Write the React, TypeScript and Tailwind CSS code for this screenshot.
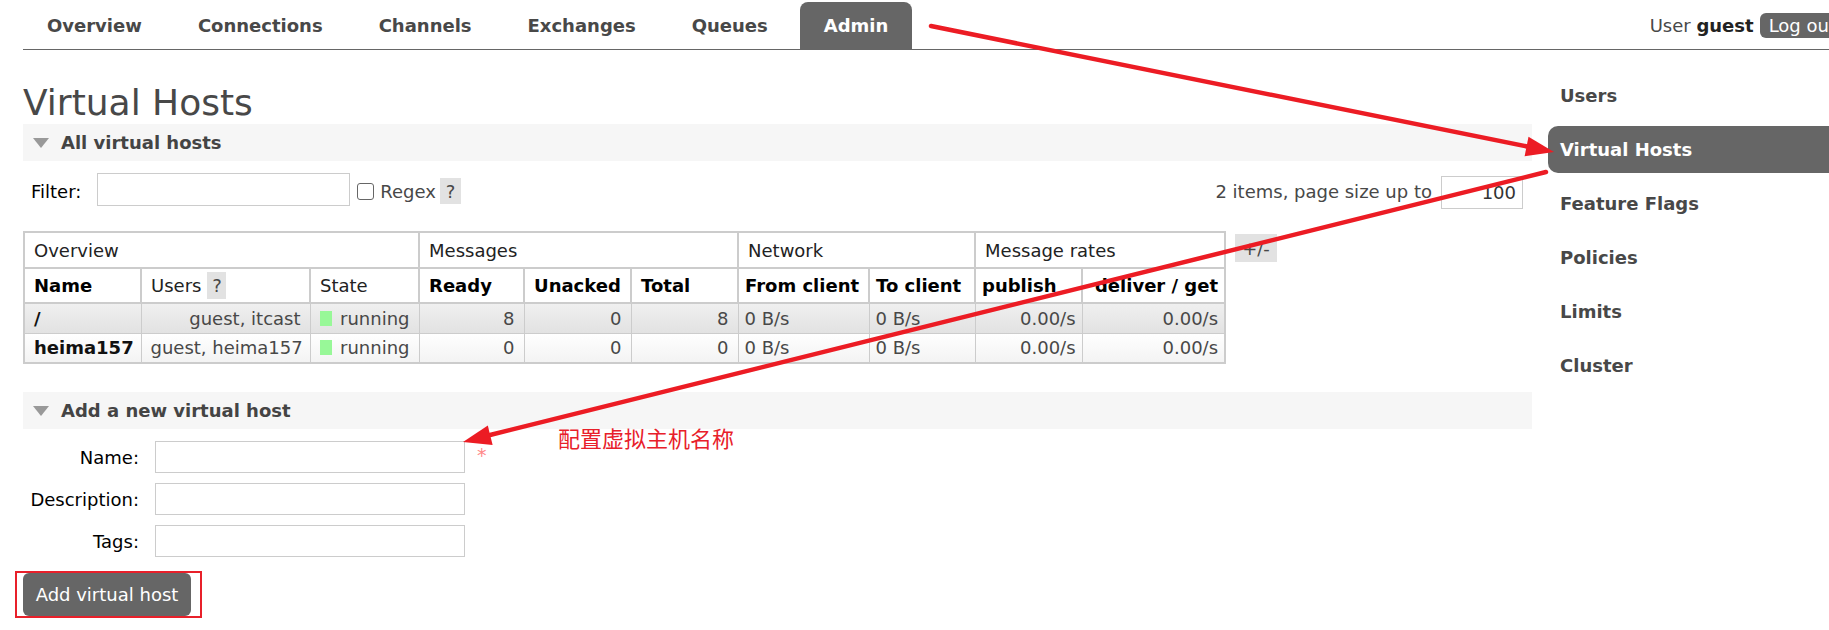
const tabs = ["Overview", "Connections", "Channels", "Exchanges", "Queues", "Admin"];
const sideItems = ["Users", "Virtual Hosts", "Feature Flags", "Policies", "Limits", "Cluster"];

const colWidths = [
  "w-[117px]",
  "w-[169px]",
  "w-[109px]",
  "w-[105px]",
  "w-[107px]",
  "w-[107px]",
  "w-[131px]",
  "w-[106px]",
  "w-[107px]",
  "w-[143px]",
];

const vhosts = [
  { name: "/", users: "guest, itcast", ready: 8, unacked: 0, total: 8, alt: true },
  { name: "heima157", users: "guest, heima157", ready: 0, unacked: 0, total: 0, alt: false },
];

export default function App() {
  return (
    <div className="relative w-full h-[630px] overflow-hidden bg-white font-['DejaVu_Sans',sans-serif] text-[18px] text-[#484848]">
      {/* Top tabs */}
      <div className="flex pl-[23px]">
        <div className="flex flex-1 items-end gap-2 border-b border-[#666] pt-[2px]">
          {tabs.map((t) => (
            <div
              key={t}
              className={
                t === "Admin"
                  ? "h-[47px] px-6 flex items-center font-bold bg-[#666] text-white rounded-t-[8px]"
                  : "h-[47px] px-6 flex items-center font-bold"
              }
            >
              {t}
            </div>
          ))}
          <div className="ml-auto self-start mt-[10px] mr-[-16px] flex items-center gap-[6px] whitespace-nowrap">
            <span>
              User <b className="text-[#222]">guest</b>
            </span>
            <span className="h-[25px] px-[9px] rounded-[6px] bg-[#666] text-white flex items-center">
              Log out
            </span>
          </div>
        </div>
      </div>

      <div className="flex">
        {/* Main column */}
        <div className="w-[1509px] ml-[23px] shrink-0">
          <h1 className="mt-[33px] h-[40px] leading-[40px] text-[36px] font-normal">Virtual Hosts</h1>

          <SectionHeader title="All virtual hosts" className="mt-[1px]" />

          {/* Filter row */}
          <div className="mt-[12px] h-[36px] flex items-center">
            <span className="ml-[8px] text-black">Filter:</span>
            <input className="self-start ml-[16px] w-[253px] h-[33px] border border-[#ccc] bg-white" />
            <span className="ml-[7px] w-[17px] h-[17px] border border-[#666] rounded-[3px] bg-white" />
            <span className="ml-[6px]">Regex</span>
            <span className="ml-[4px] w-[21px] h-[26px] bg-[#e2e2e2] flex items-center justify-center">?</span>
            <span className="ml-auto">2 items, page size up to</span>
            <div className="self-end ml-[9px] mr-[9px] w-[82px] h-[33px] border border-[#ccc] flex items-center justify-end pr-[6px] text-[#333]">
              100
            </div>
          </div>

          {/* Table */}
          <div className="mt-[22px] flex items-start gap-[9px]">
            <table className="table-fixed border-collapse w-[1201px] border-2 border-[#ccc]">
              <colgroup>
                {colWidths.map((w, i) => (
                  <col key={i} className={w} />
                ))}
              </colgroup>
              <thead>
                <tr className="h-[36px] text-[#222]">
                  <th colSpan={3} className="border-2 border-[#ccc] px-[9px] text-left font-normal">Overview</th>
                  <th colSpan={3} className="border-2 border-[#ccc] px-[9px] text-left font-normal">Messages</th>
                  <th colSpan={2} className="border-2 border-[#ccc] px-[9px] text-left font-normal">Network</th>
                  <th colSpan={2} className="border-2 border-[#ccc] px-[9px] text-left font-normal">Message rates</th>
                </tr>
                <tr className="h-[35px] text-black">
                  <th className="border-2 border-[#ccc] px-[9px] text-left font-bold">Name</th>
                  <th className="border-2 border-[#ccc] px-[9px] text-left font-normal">
                    <div className="flex items-center">
                      <span className="text-[#222]">Users</span>
                      <span className="ml-[6px] w-[19px] h-[27px] bg-[#e2e2e2] flex items-center justify-center text-[#484848]">
                        ?
                      </span>
                    </div>
                  </th>
                  <th className="border-2 border-[#ccc] px-[9px] text-left font-normal text-[#222]">State</th>
                  <th className="border-2 border-[#ccc] px-[9px] text-left font-bold">Ready</th>
                  <th className="border-2 border-[#ccc] px-[9px] text-left font-bold">Unacked</th>
                  <th className="border-2 border-[#ccc] px-[9px] text-left font-bold">Total</th>
                  <th className="border-2 border-[#ccc] px-[6px] text-left font-bold whitespace-nowrap">From client</th>
                  <th className="border-2 border-[#ccc] px-[6px] text-left font-bold whitespace-nowrap">To client</th>
                  <th className="border-2 border-[#ccc] px-[6px] text-left font-bold">publish</th>
                  <th className="border-2 border-[#ccc] px-[6px] text-right font-bold whitespace-nowrap">deliver / get</th>
                </tr>
              </thead>
              <tbody>
                {vhosts.map((v) => (
                  <tr
                    key={v.name}
                    className={
                      v.alt
                        ? "h-[30px] bg-linear-to-b from-[#f0f0f0] to-[#e2e2e2]"
                        : "h-[30px] bg-linear-to-b from-white to-[#f3f3f3]"
                    }
                  >
                    <td className="border border-[#ccc] px-[9px] font-bold text-[#111]">{v.name}</td>
                    <td className="border border-[#ccc] px-[9px] text-right whitespace-nowrap">{v.users}</td>
                    <td className="border border-[#ccc] px-[9px]">
                      <div className="flex items-center">
                        <span className="w-[15px] h-[15px] bg-[#98f898]" />
                        <span className="ml-[8px]">running</span>
                      </div>
                    </td>
                    <td className="border border-[#ccc] px-[9px] text-right">{v.ready}</td>
                    <td className="border border-[#ccc] px-[9px] text-right">{v.unacked}</td>
                    <td className="border border-[#ccc] px-[9px] text-right">{v.total}</td>
                    <td className="border border-[#ccc] px-[6px]">0 B/s</td>
                    <td className="border border-[#ccc] px-[6px]">0 B/s</td>
                    <td className="border border-[#ccc] px-[6px] text-right">0.00/s</td>
                    <td className="border border-[#ccc] px-[6px] text-right">0.00/s</td>
                  </tr>
                ))}
              </tbody>
            </table>
            <span className="mt-[3px] w-[42px] h-[28px] bg-[#e2e2e2] flex items-center justify-center">+/-</span>
          </div>

          <SectionHeader title="Add a new virtual host" className="mt-[28px]" />

          {/* Form */}
          <div className="mt-[12px] flex flex-col gap-[10px]">
            <FormRow label="Name:" required />
            <FormRow label="Description:" />
            <FormRow label="Tags:" />
          </div>

          <div className="mt-[14px] ml-[-8px] inline-flex border-2 border-[#e8202a] pl-[6px] pr-[9px]">
            <button className="h-[43px] w-[168px] rounded-[6px] bg-[#666] text-white text-[18px]">
              Add virtual host
            </button>
          </div>
        </div>

        {/* Side menu */}
        <div className="flex-1 ml-[16px] mt-[22px] flex flex-col gap-[7px]">
          {sideItems.map((s) => (
            <div
              key={s}
              className={
                s === "Virtual Hosts"
                  ? "h-[47px] pl-[12px] flex items-center font-bold whitespace-nowrap bg-[#666] text-white rounded-l-[10px]"
                  : "h-[47px] pl-[12px] flex items-center font-bold whitespace-nowrap"
              }
            >
              {s}
            </div>
          ))}
        </div>
      </div>

      {/* Annotation */}
      <div className="absolute left-[558px] top-[423px] text-[22px] leading-[28px] text-[#e8202a] font-['Noto_Sans_CJK_SC',sans-serif]">
        配置虚拟主机名称
      </div>

      {/* Arrows */}
      <svg className="absolute left-0 top-0 pointer-events-none" width="1829" height="630" viewBox="0 0 1829 630">
        <line x1="931" y1="26" x2="1527" y2="146.5" stroke="#ec1c24" strokeWidth="4.5" strokeLinecap="round" />
        <polygon points="1554,152 1524.6,156.3 1528.5,136.7" fill="#ec1c24" />
        <line x1="1546" y1="172" x2="490" y2="435" stroke="#ec1c24" strokeWidth="4.5" strokeLinecap="round" />
        <polygon points="463,442 487.8,425.5 492.6,444.9" fill="#ec1c24" />
      </svg>
    </div>
  );
}

function SectionHeader({ title, className }: { title: string; className?: string }) {
  return (
    <div className={`h-[37px] bg-[#f6f6f6] flex items-center ${className ?? ""}`}>
      <span className="ml-[10px] w-0 h-0 border-x-[8px] border-x-transparent border-t-[10px] border-t-[#999]" />
      <span className="ml-[12px] font-bold text-[#444]">{title}</span>
    </div>
  );
}

function FormRow({ label, required }: { label: string; required?: boolean }) {
  return (
    <div className="flex items-center">
      <span className="w-[116px] text-right text-black">{label}</span>
      <input className="ml-[16px] w-[310px] h-[32px] border border-[#ccc] bg-white" />
      {required && <span className="ml-[12px] self-start mt-[2px] text-[19px] leading-[24px] text-[#f88]">*</span>}
    </div>
  );
}
